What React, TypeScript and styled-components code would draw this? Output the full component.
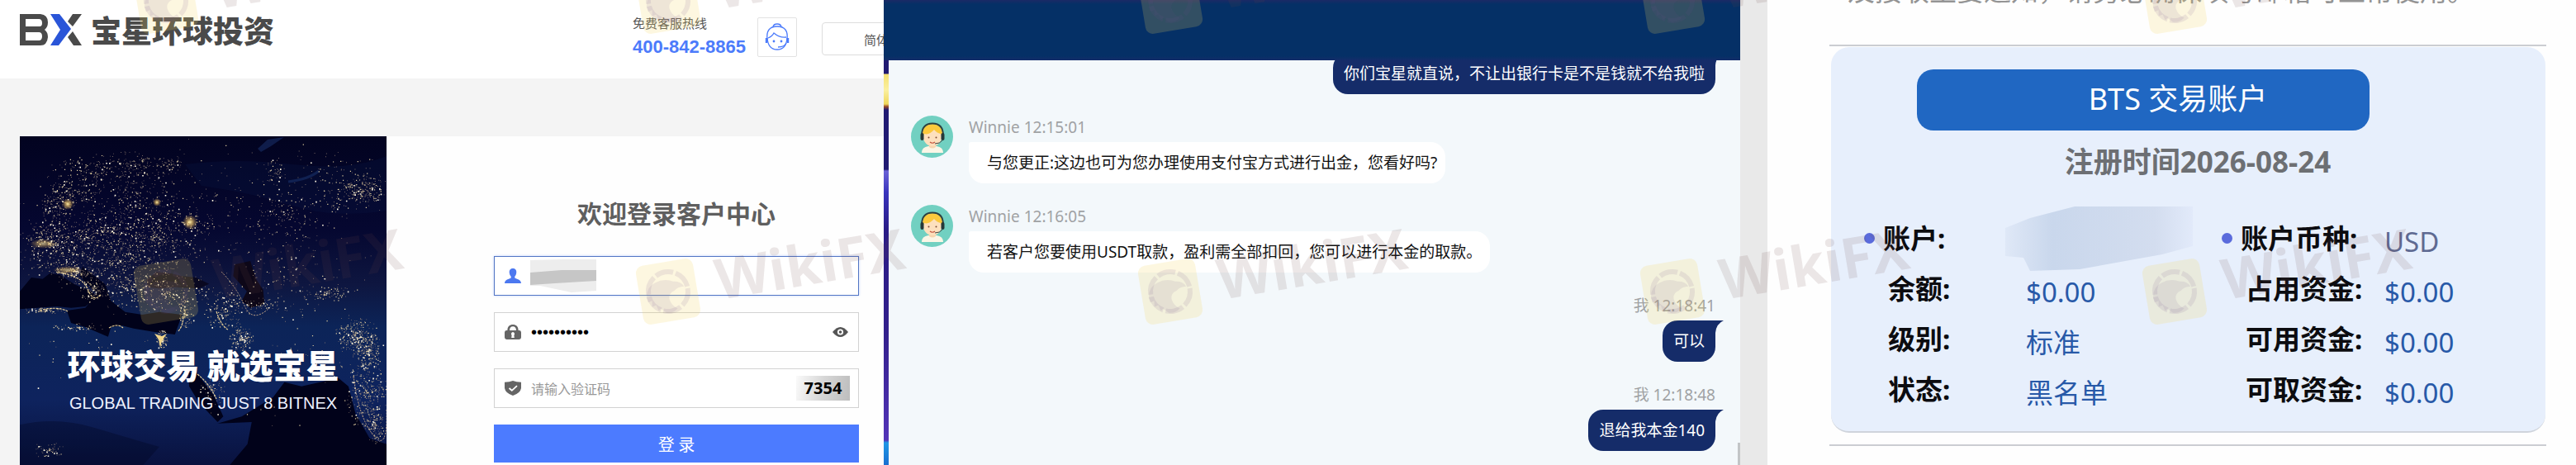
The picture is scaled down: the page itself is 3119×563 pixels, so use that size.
import React from "react";
import styled, { createGlobalStyle, css } from "styled-components";

const GlobalStyle = createGlobalStyle`
  * { box-sizing: border-box; }
  body {
    margin: 0;
    background: #fff;
    font-family: "Noto Sans", "Noto Sans CJK SC", sans-serif;
  }
  button, input, select { font-family: inherit; margin: 0; }
  h1, h2, p, dl, dt, dd { margin: 0; }
`;

const Page = styled.main`
  position: relative;
  display: grid;
  grid-template-columns: minmax(0, 1070fr) minmax(0, 1037fr) 33px minmax(0, 979fr);
  height: 100vh;
  overflow: hidden;
`;

const Divider = styled.div`
  background: #e9e9e9;
`;

/* ---------- login panel ---------- */

const LoginPanel = styled.section`
  display: flex;
  flex-direction: column;
  overflow: hidden;
  background: #f4f4f4;
  font-family: "Noto Sans CJK SC", sans-serif;
`;

const LoginHeader = styled.header`
  display: flex;
  justify-content: space-between;
  height: 95px;
  flex: none;
  padding-left: 24px;
  background: #fff;
`;

const Brand = styled.a`
  display: flex;
  gap: 10px;
  height: 38px;
  margin-top: 17px;
  color: #4a4a4a;
  font-size: 37px;
  line-height: 38px;
  font-weight: 900;
  text-decoration: none;
  white-space: nowrap;
`;

const HeaderTools = styled.div`
  display: flex;
  align-items: flex-start;
  width: 304px;
  flex: none;
`;

const Hotline = styled.div`
  width: 151px;
  flex: none;
  padding-top: 18px;
`;

const HotlineLabel = styled.p`
  color: #555;
  font-size: 15px;
  line-height: 20px;
`;

const HotlineNumber = styled.p`
  margin-top: 4px;
  color: #4c7bfb;
  font-family: "Liberation Sans Narrow", "Liberation Sans", sans-serif;
  font-size: 22px;
  line-height: 30px;
  font-weight: 700;
  white-space: nowrap;
`;

const ServiceButton = styled.button`
  display: grid;
  place-items: center;
  width: 48px;
  height: 48px;
  flex: none;
  margin: 21px 30px 0 0;
  padding: 0;
  border: 1px solid #e2e2e2;
  border-radius: 2px;
  background: #fff;
`;

const LanguageSelect = styled.select`
  appearance: none;
  width: 160px;
  height: 40px;
  flex: none;
  margin-top: 27px;
  padding: 0 50px;
  border: 1px solid #ddd;
  border-radius: 4px;
  background: #fff;
  color: #555;
  font-size: 15px;
`;

const LoginBody = styled.div`
  display: flex;
  flex: 1;
  padding: 70px 0 0 24px;
`;

const Hero = styled.div`
  position: relative;
  width: 444px;
  flex: none;
  padding-top: 250px;
  overflow: hidden;
  background: #02031c;
  color: #fff;
  text-align: center;
`;

const HeroArt = styled.svg`
  position: absolute;
  left: 0;
  top: 0;
`;

const Slogan = styled.h2`
  position: relative;
  font-size: 40px;
  line-height: 52px;
  font-weight: 900;
  white-space: nowrap;
`;

const SloganSub = styled.p`
  position: relative;
  margin-top: 9px;
  font-family: "Liberation Sans", sans-serif;
  font-size: 20px;
  line-height: 24px;
  color: #eef2ff;
  white-space: nowrap;
`;

const FormArea = styled.div`
  flex: 1;
  min-width: 0;
  padding: 72px 30px 0 130px;
  background: #fefefe;
`;

const LoginForm = styled.form`
  display: flex;
  flex-direction: column;
  gap: 20px;
`;

const FormTitle = styled.h1`
  margin-bottom: 13px;
  color: #5f5f5f;
  font-size: 30px;
  line-height: 40px;
  font-weight: 700;
  text-align: center;
`;

const Field = styled.div<{ $active?: boolean }>`
  position: relative;
  display: flex;
  align-items: center;
  height: 48px;
  padding: 0 10px 0 12px;
  border: 1px solid ${(p) => (p.$active ? "#5275c4" : "#d2d2d2")};
  box-shadow: ${(p) => (p.$active ? "0 0 3px #c4d6ff" : "none")};
  background: #fff;
`;

const FieldIcon = styled.label`
  display: flex;
  width: 20px;
  margin-right: 12px;
`;

const FieldInput = styled.input<{ $password?: boolean }>`
  flex: 1;
  min-width: 0;
  height: 44px;
  padding: 0;
  border: 0;
  outline: 0;
  background: transparent;
  color: #000;
  font-size: 16px;
  ${(p) =>
    p.$password &&
    css`
      font-family: "Liberation Sans", sans-serif;
      font-size: 20px;
    `}
  &::placeholder {
    color: #999;
  }
`;

const Redaction = styled.svg`
  position: absolute;
  left: 43px;
  top: 3px;
`;

const IconButton = styled.button`
  display: flex;
  margin-right: 2px;
  padding: 0;
  border: 0;
  background: none;
`;

const Captcha = styled.div`
  width: 65px;
  height: 30px;
  background: linear-gradient(100deg, #fafafa, #d6d6d6 50%, #bdbdbd);
  color: #000;
  font-family: "Noto Sans", sans-serif;
  font-size: 20px;
  line-height: 30px;
  font-weight: 700;
  text-align: center;
`;

const SubmitButton = styled.button`
  height: 46px;
  padding: 0;
  border: 0;
  background: #4c7bff;
  color: #fff;
  font-size: 20px;
`;

/* ---------- chat panel ---------- */

const ChatPanel = styled.section`
  display: flex;
  flex-direction: column;
  min-height: 0;
  overflow: hidden;
  background: #f3f8fb;
`;

const ChatHeader = styled.header`
  height: 73px;
  flex: none;
  background: linear-gradient(#1b2a66, #053066 5px, #053066 68px, #142c6a);
`;

const ChatBody = styled.div`
  position: relative;
  display: flex;
  flex: 1;
  min-height: 0;
`;

const ChatEdge = styled.div`
  width: 6px;
  flex: none;
  background: linear-gradient(
    #211a72 16px,
    #f5e173 17px,
    #fbf0a0 36px,
    #efd75c 53px,
    #9a4a28 56px,
    #211a72 60px,
    #211a72 132px,
    #6a62d6 134px,
    #3a34bd 160px,
    #2a1c86 205px,
    #33208c 330px,
    #5334b8 460px,
    #1f98e6 463px,
    #1a6fd0
  );
`;

const Messages = styled.div`
  display: flex;
  flex: 1;
  flex-direction: column;
  justify-content: flex-end;
  gap: 22px;
  padding: 0 30px 17px 27px;
  overflow: hidden;
`;

const ScrollThumb = styled.div`
  position: absolute;
  right: 0;
  bottom: 0;
  width: 3px;
  height: 27px;
  background: #c2c5c7;
`;

const Message = styled.article<{ $own?: boolean }>`
  display: flex;
  flex: none;
  gap: 19px;
  justify-content: ${(p) => (p.$own ? "flex-end" : "flex-start")};
`;

const AvatarArt = styled.svg`
  flex: none;
  margin-top: 4px;
`;

const MessageText = styled.div<{ $own?: boolean }>`
  display: flex;
  flex-direction: column;
  align-items: ${(p) => (p.$own ? "flex-end" : "flex-start")};
`;

const Meta = styled.p`
  height: 36px;
  color: #a0a2a4;
  font-size: 19px;
  line-height: 36px;
  white-space: nowrap;
`;

const Bubble = styled.p<{ $own?: boolean }>`
  position: relative;
  height: 50px;
  padding: ${(p) => (p.$own ? "0 13px" : "0 10px 0 22px")};
  border-radius: ${(p) => (p.$own ? "18px 0 18px 18px" : "3px 18px 18px 18px")};
  background: ${(p) => (p.$own ? "#152c69" : "#fff")};
  color: ${(p) => (p.$own ? "#fff" : "#111")};
  font-size: 19px;
  line-height: 50px;
  white-space: nowrap;
`;

const BubbleTail = styled.svg`
  position: absolute;
  left: 100%;
  top: 0;
`;

/* ---------- account panel ---------- */

const AccountPanel = styled.section`
  padding: 0 36px 0 75px;
  overflow: hidden;
  background: #fefefe;
`;

const Notice = styled.p`
  display: flow-root;
  height: 54px;
  padding-left: 22px;
  color: #949494;
  font-size: 33px;
  line-height: 40px;
  white-space: nowrap;
  & > span {
    display: block;
    margin-top: -31px;
  }
`;

const Rule = styled.hr`
  height: 2px;
  margin: 0;
  border: 0;
  background: #cbcdd2;
`;

const AccountCard = styled.div`
  margin: 1px 1px 14px 2px;
  padding: 27px 0 20px;
  border-bottom: 2px solid #cfd4dc;
  border-radius: 22px;
  background: #e7effc;
`;

const AccountTitle = styled.h2`
  width: 548px;
  height: 74px;
  margin-left: 104px;
  padding-left: 84px;
  border-radius: 20px;
  background: #2067c2;
  color: #fff;
  font-size: 36px;
  line-height: 72px;
  font-weight: 400;
  text-align: center;
`;

const Registered = styled.p`
  padding-left: 23px;
  margin: 14px 0 38px;
  color: #6d6f73;
  font-size: 35px;
  line-height: 48px;
  font-weight: 700;
  text-align: center;
`;

const Facts = styled.dl`
  display: grid;
  grid-template-columns: 196px 237px 197px 1fr;
  grid-auto-rows: 61px;
  padding-left: 40px;
`;

const FactLabel = styled.dt<{ $dotted?: boolean }>`
  display: flex;
  align-items: center;
  gap: 10px;
  padding-left: ${(p) => (p.$dotted ? "0" : "29px")};
  color: #0c0c10;
  font-size: 33px;
  line-height: 60px;
  font-weight: 700;
  white-space: nowrap;
  ${(p) =>
    p.$dotted &&
    css`
      &::before {
        content: "";
        width: 13px;
        height: 13px;
        border-radius: 50%;
        background: #5a6bdc;
      }
    `}
`;

const FactValue = styled.dd<{ $muted?: boolean }>`
  position: relative;
  padding-top: 5px;
  color: ${(p) => (p.$muted ? "#5f6a92" : "#2859a8")};
  font-size: 33px;
  line-height: 60px;
  white-space: nowrap;
`;

const AccountRedaction = styled.svg`
  position: absolute;
  left: -25px;
  top: -8px;
`;

const WatermarkLayer = styled.svg`
  position: absolute;
  inset: 0;
  width: 100%;
  height: 100%;
  pointer-events: none;
`;

/* ---------- drawings ---------- */

const makeRandom = (seed: number) => () => {
  seed = (seed * 16807) % 2147483647;
  return seed / 2147483647;
};

// [centre x, centre y, radius x, radius y, number of lights]
const CLUSTERS: number[][] = [
  [135, 35, 70, 16, 160], [80, 45, 50, 18, 90], [130, 65, 60, 40, 240], [60, 70, 35, 18, 140],
  [45, 85, 20, 16, 90], [100, 115, 90, 26, 380], [40, 130, 40, 28, 300], [110, 150, 95, 38, 520],
  [182, 32, 8, 8, 24], [165, 120, 70, 40, 340], [205, 105, 40, 14, 80], [310, 45, 14, 14, 50],
  [415, 65, 28, 16, 170], [400, 60, 50, 36, 160], [320, 95, 70, 34, 170], [340, 25, 40, 20, 12],
  [65, 163, 30, 8, 150], [88, 185, 14, 14, 90], [130, 180, 50, 34, 200], [180, 190, 50, 24, 240],
  [200, 215, 9, 22, 110], [246, 210, 22, 26, 150], [268, 245, 14, 13, 150], [172, 246, 7, 12, 100],
  [70, 231, 30, 5, 60], [30, 211, 26, 4, 60], [370, 190, 35, 8, 70], [320, 170, 100, 60, 200],
  [290, 205, 40, 10, 70], [235, 305, 18, 20, 60], [405, 240, 24, 22, 260], [422, 258, 16, 26, 230],
  [420, 310, 24, 42, 340], [430, 350, 12, 20, 130], [35, 380, 16, 10, 60], [290, 330, 70, 80, 14],
  [100, 255, 90, 25, 28], [60, 285, 50, 40, 8], [360, 265, 60, 30, 50], [220, 70, 230, 60, 180],
];

const lights = (() => {
  const rnd = makeRandom(4271);
  const tones = ["", "", ""];
  CLUSTERS.forEach(([cx, cy, rx, ry, n]) => {
    for (let i = 0; i < n; i++) {
      const angle = rnd() * Math.PI * 2;
      const radius = Math.pow(rnd(), 0.8) * (0.8 + rnd() * 0.4);
      const x = (cx + Math.cos(angle) * rx * radius).toFixed(1);
      const y = (cy + Math.sin(angle) * ry * radius).toFixed(1);
      const pick = rnd();
      const tone = pick < 0.7 ? 0 : pick < 0.94 ? 1 : 2;
      const s = tone === 0 ? 0.9 : tone === 1 ? 1.2 : 1.6;
      tones[tone] += `M${x} ${y}h${s}v${s}h-${s}z`;
    }
  });
  return tones;
})();

const EarthAtNight = () => (
  <HeroArt width="444" height="398" viewBox="0 0 444 398" aria-hidden="true">
    <defs>
      <linearGradient id="land" x1="0" y1="0" x2="0" y2="1">
        <stop offset="0" stopColor="#020320" />
        <stop offset="0.28" stopColor="#050730" />
        <stop offset="0.45" stopColor="#0e1640" />
        <stop offset="0.58" stopColor="#0c2458" />
        <stop offset="0.8" stopColor="#0e235e" />
        <stop offset="1" stopColor="#09123f" />
      </linearGradient>
      <radialGradient id="glow">
        <stop offset="0" stopColor="#fff0b0" />
        <stop offset="0.35" stopColor="#eec56a" stopOpacity="0.7" />
        <stop offset="1" stopColor="#d8a24a" stopOpacity="0" />
      </radialGradient>
    </defs>
    <rect width="444" height="398" fill="url(#land)" />
    <path d="M288 15 300 4 320 1 304 12 292 19z" fill="#15285c" opacity="0.7" />
    <path d="M325 55Q350 52 362 42" stroke="#15285c" strokeWidth="3" fill="none" />
    <path d="M200 34Q260 26 330 34T444 24V90Q380 100 330 84T220 60z" fill="#0a1440" opacity="0.35" />
    <g transform="translate(-24 116) scale(.3444 .3333)" fill="#01021a">
      <path d="M70 215 110 165 150 170 175 150 210 155 262 190 320 215 345 235 300 270 250 275 200 270 70 280z" />
      <path d="M235 285 300 275 340 225 280 160 290 125 370 190 390 250 440 290 500 300 560 290 640 300 615 372 540 362 470 350 430 340 390 345 380 380 300 345 250 330z" />
      <path d="M515 175 550 145 600 150 640 160 690 165 735 188 700 205 620 200 560 205 520 200z" fill="#090820" />
      <path d="M825 118 880 105 900 170 925 210 930 262 880 275 850 250 868 215 820 160z" fill="#0d0718" />
      <path d="M663 510 692 512 750 590 785 670 765 690 700 620 665 560z" />
      <path d="M765 695 850 670 960 600 1000 545 1060 560 1190 530 1225 560 1250 660 1300 750 1359 770V850H805L870 770 885 690z" />
      <path d="M70 700Q200 670 330 710T560 780L500 850H70z" opacity="0.3" />
    </g>
    <path d={lights[0]} fill="#a08b78" opacity="0.8" />
    <path d={lights[1]} fill="#e2cfa0" />
    <path d={lights[2]} fill="#fff7e0" />
    <circle cx="206" cy="104" r="9" fill="url(#glow)" />
    <circle cx="166" cy="80" r="5" fill="url(#glow)" />
    <circle cx="58" cy="82" r="7" fill="url(#glow)" />
    <ellipse cx="28" cy="130" rx="16" ry="6" fill="url(#glow)" opacity="0.7" />
    <ellipse cx="58" cy="162" rx="18" ry="5" fill="url(#glow)" opacity="0.7" />
    <path d="M163 239 172 242 178 239 172 248 170 256 168 246z" fill="#f2d689" />
    <path d="M45 165Q75 168 82 185T98 192M192 236Q198 228 198 218M238 212Q244 230 252 234M215 288Q230 300 238 318M24 211Q45 205 58 212M108 232Q118 226 125 232" stroke="#e9cf95" strokeWidth="1.2" strokeDasharray="3 1" fill="none" />
    <path d="M404 290Q410 340 428 362T444 330M244 164Q262 182 272 205T304 206" stroke="#c9a98a" strokeWidth="1" strokeDasharray="2 1.5" fill="none" />
  </HeroArt>
);

const BrandMark = () => (
  <svg width="76" height="38" viewBox="0 0 76 38" role="img" aria-label="BX">
    <path fillRule="evenodd" fill="#4a4a4a" d="M0 0H25Q34 1 34 10 34 16 30 19 34 22 34 28 33 38 25 38H0zM7 6V15H24Q27 15 27 11 27 6 23 6zM7 22V32H23Q27 32 27 27 27 22 23 22z" />
    <path fill="#2a55d8" d="M37 0H48L62 18 47 38H37L49 19z" />
    <path fill="#4a4a4a" d="M64 0H75L64 15 58 9zM58 28 64 21 75 38H65z" />
  </svg>
);

const AgentIcon = () => (
  <svg width="30" height="34" viewBox="0 0 30 34" fill="none" stroke="#4c7bfb" strokeWidth="1.3">
    <path d="M10 4Q11 1 15 1T20 4" />
    <path d="M3 20Q1 4 15 4T27 20" />
    <path d="M3 18Q4 32 15 32T27 18" />
    <path d="M4 18Q9 16 11 12 18 18 26 17" />
    <path d="M2 18V24M28 18V24" strokeWidth="2.4" />
    <path d="M26 24Q24 29 16 29" />
    <circle cx="11" cy="22" r="1.4" fill="#4c7bfb" stroke="none" />
    <circle cx="20" cy="22" r="1.4" fill="#4c7bfb" stroke="none" />
  </svg>
);

const UserIcon = () => (
  <svg width="20" height="18" viewBox="0 0 20 18" fill="#4c78f0">
    <path d="M10 0C13.5 0 14.6 2.6 14.2 5.6 13.9 8 13 9 12.3 9.8V11.4C14.5 12.8 20 13 20 18H0C0 13 5.5 12.8 7.7 11.4V9.8C7 9 6.1 8 5.8 5.6 5.4 2.6 6.5 0 10 0z" />
  </svg>
);

const LockIcon = () => (
  <svg width="20" height="18" viewBox="0 0 20 18" fill="#656565">
    <path fillRule="evenodd" d="M3.4 7C3.4 2.6 6 0 10 0S16.6 2.6 16.6 7H18Q20 7.4 20 9.4V15.6Q20 18 17.6 18H2.4Q0 18 0 15.6V9.4Q0 7.4 2 7zM6 7H14C14 3.800 12.500 2.200 10 2.200S6 3.800 6 7zM10 9A2.400 2.400 0 0 0 8.600 13L8.200 16H11.800L11.400 13A2.400 2.400 0 0 0 10 9z" />
  </svg>
);

const ShieldIcon = () => (
  <svg width="20" height="18" viewBox="0 0 20 18">
    <path d="M10 0Q14 1.800 20 1.800V9Q19 15 10 18 1 15 0 9V1.800Q6 1.800 10 0z" fill="#656565" />
    <path d="M5.500 9 8.800 11.800 15 6.200" fill="none" stroke="#fff" strokeWidth="1.800" />
  </svg>
);

const EyeIcon = () => (
  <svg width="19" height="12" viewBox="0 0 19 12">
    <path d="M0 6Q9.500-6 19 6 9.500 18 0 6z" fill="#555" />
    <circle cx="9.500" cy="6" r="3.600" fill="#fff" />
    <circle cx="9.500" cy="6" r="1.800" fill="#555" />
  </svg>
);

const Avatar = () => (
  <AvatarArt width="51" height="51" viewBox="0 0 51 51" aria-hidden="true">
    <circle cx="25.500" cy="25.500" r="25.500" fill="#71d0c1" />
    <path d="M13 45Q13 38 21 37H31Q39 38 39 45z" fill="#fbf6e6" />
    <path d="M22 33H30V38Q26 41 22 38z" fill="#f7d5ae" />
    <ellipse cx="26" cy="26" rx="11" ry="11" fill="#fde0bd" />
    <path d="M14 27Q12 11 26 10 40 11 38 27L36 22Q31 21 28 17 22 24 16 22z" fill="#fbc93d" />
    <path d="M13 24Q13 9.500 26 9.500T39 24" fill="none" stroke="#2c4040" strokeWidth="1.800" />
    <rect x="11.500" y="21" width="4" height="9" rx="2" fill="#263838" />
    <rect x="36.500" y="21" width="4" height="9" rx="2" fill="#263838" />
    <path d="M38 30Q35 34 29 34" fill="none" stroke="#3c4a48" strokeWidth="1" />
    <circle cx="21.500" cy="26.500" r="1" fill="#7a4a34" />
    <circle cx="30.500" cy="26.500" r="1" fill="#7a4a34" />
    <path d="M23 32Q26 34.500 29 32" fill="none" stroke="#c2523c" strokeWidth="1.200" />
  </AvatarArt>
);

const WatermarkMark = ({ x, y }: { x: number; y: number }) => (
  <g transform={`translate(${x} ${y}) rotate(-9.500)`}>
    <rect x="-35" y="-36" width="70" height="72" rx="9" fill="#f5d65a" fillOpacity="0.19" />
    <circle r="24" fill="none" stroke="#6a4a8a" strokeOpacity="0.11" strokeWidth="6" strokeDasharray="22 3.100" />
    <path
      d="M-27 3Q-25-10-14-13-2-17 8-11 17-10 20-3 12-4 8 0 0 2 0 9 1 17 8 22 2 27-6 25L-12 19-15 21-17 14-22 15-21 8-26 9z"
      fill="#6a4a8a"
      fillOpacity="0.1"
    />
    <text x="59" y="20" fontFamily='"Noto Sans", sans-serif' fontSize="68" fontWeight="700" fill="#6b4548" fillOpacity="0.13">
      WikiFX
    </text>
  </g>
);

const WATERMARK_COLUMNS = [201, 809, 1417, 2025, 2633];
const WATERMARK_ROWS = [1, 353];

/* ---------- content ---------- */

const MESSAGES = [
  { own: true, time: "12:14:20", text: "你们宝星就直说，不让出银行卡是不是钱就不给我啦" },
  { own: false, time: "12:15:01", text: "与您更正:这边也可为您办理使用支付宝方式进行出金，您看好吗?" },
  { own: false, time: "12:16:05", text: "若客户您要使用USDT取款，盈利需全部扣回，您可以进行本金的取款。" },
  { own: true, time: "12:18:41", text: "可以" },
  { own: true, time: "12:18:48", text: "退给我本金140" },
];

const FACTS = [
  { label: "账户:", value: "", dotted: true },
  { label: "账户币种:", value: "USD", dotted: true },
  { label: "余额:", value: "$0.00" },
  { label: "占用资金:", value: "$0.00" },
  { label: "级别:", value: "标准" },
  { label: "可用资金:", value: "$0.00" },
  { label: "状态:", value: "黑名单" },
  { label: "可取资金:", value: "$0.00" },
];

export default function App() {
  return (
    <Page>
      <GlobalStyle />

      <LoginPanel>
        <LoginHeader>
          <Brand href="#">
            <BrandMark />
            宝星环球投资
          </Brand>
          <HeaderTools>
            <Hotline>
              <HotlineLabel>免费客服热线</HotlineLabel>
              <HotlineNumber>400-842-8865</HotlineNumber>
            </Hotline>
            <ServiceButton type="button" aria-label="客服">
              <AgentIcon />
            </ServiceButton>
            <LanguageSelect aria-label="语言">
              <option>简体中文</option>
            </LanguageSelect>
          </HeaderTools>
        </LoginHeader>
        <LoginBody>
          <Hero>
            <EarthAtNight />
            <Slogan>环球交易 就选宝星</Slogan>
            <SloganSub>GLOBAL TRADING JUST 8 BITNEX</SloganSub>
          </Hero>
          <FormArea>
            <LoginForm onSubmit={(e) => e.preventDefault()}>
              <FormTitle>欢迎登录客户中心</FormTitle>
              <Field $active>
                <FieldIcon htmlFor="account"><UserIcon /></FieldIcon>
                <FieldInput id="account" aria-label="账户" />
                <Redaction width="80" height="40" viewBox="0 0 80 40" aria-hidden="true">
                  <path d="M0 1 40 0H80V38L50 40 12 32H0z" fill="#ededed" />
                  <path d="M0 16 38 13H80V26L30 29 0 31z" fill="#c6c6c6" />
                </Redaction>
              </Field>
              <Field>
                <FieldIcon htmlFor="password"><LockIcon /></FieldIcon>
                <FieldInput id="password" type="password" aria-label="密码" defaultValue="aaaaaaaaaa" $password />
                <IconButton type="button" aria-label="显示密码"><EyeIcon /></IconButton>
              </Field>
              <Field>
                <FieldIcon htmlFor="captcha"><ShieldIcon /></FieldIcon>
                <FieldInput id="captcha" aria-label="验证码" placeholder="请输入验证码" />
                <Captcha>7354</Captcha>
              </Field>
              <SubmitButton type="submit">登 录</SubmitButton>
            </LoginForm>
          </FormArea>
        </LoginBody>
      </LoginPanel>

      <ChatPanel>
        <ChatHeader />
        <ChatBody>
          <ChatEdge />
          <Messages>
            {MESSAGES.map((m) => (
              <Message key={m.time} $own={m.own}>
                {!m.own && <Avatar />}
                <MessageText $own={m.own}>
                  <Meta>{m.own ? "我" : "Winnie"} {m.time}</Meta>
                  <Bubble $own={m.own}>
                    {m.text}
                    {m.own && (
                      <BubbleTail width="10" height="16" viewBox="0 0 10 16">
                        <path d="M0 0H10Q1 4 0 15z" fill="#152c69" />
                      </BubbleTail>
                    )}
                  </Bubble>
                </MessageText>
              </Message>
            ))}
          </Messages>
          <ScrollThumb />
        </ChatBody>
      </ChatPanel>

      <Divider />

      <AccountPanel>
        <Notice>
          <span>及接收主要通知，请务必确保填写邮箱可正常使用。</span>
        </Notice>
        <Rule />
        <AccountCard>
          <AccountTitle>BTS 交易账户</AccountTitle>
          <Registered>注册时间2026-08-24</Registered>
          <Facts>
            {FACTS.map((f) => (
              <React.Fragment key={f.label}>
                <FactLabel $dotted={f.dotted}>{f.label}</FactLabel>
                <FactValue $muted={f.dotted}>
                  {f.value || (
                    <AccountRedaction width="230" height="80" viewBox="0 0 230 80" role="img" aria-label="账户">
                      <defs>
                        <linearGradient id="smudge">
                          <stop offset="0" stopColor="#dfe8f7" />
                          <stop offset="0.25" stopColor="#c9d7ec" />
                          <stop offset="0.8" stopColor="#d3ddef" />
                          <stop offset="1" stopColor="#e2eafa" />
                        </linearGradient>
                      </defs>
                      <path d="M0 26 30 14 84 0H227V48L190 58 90 76 30 78 22 62 0 60z" fill="url(#smudge)" />
                    </AccountRedaction>
                  )}
                </FactValue>
              </React.Fragment>
            ))}
          </Facts>
        </AccountCard>
        <Rule />
      </AccountPanel>

      <WatermarkLayer aria-hidden="true">
        {WATERMARK_ROWS.map((y) => WATERMARK_COLUMNS.map((x) => <WatermarkMark key={`${x}-${y}`} x={x} y={y} />))}
      </WatermarkLayer>
    </Page>
  );
}
